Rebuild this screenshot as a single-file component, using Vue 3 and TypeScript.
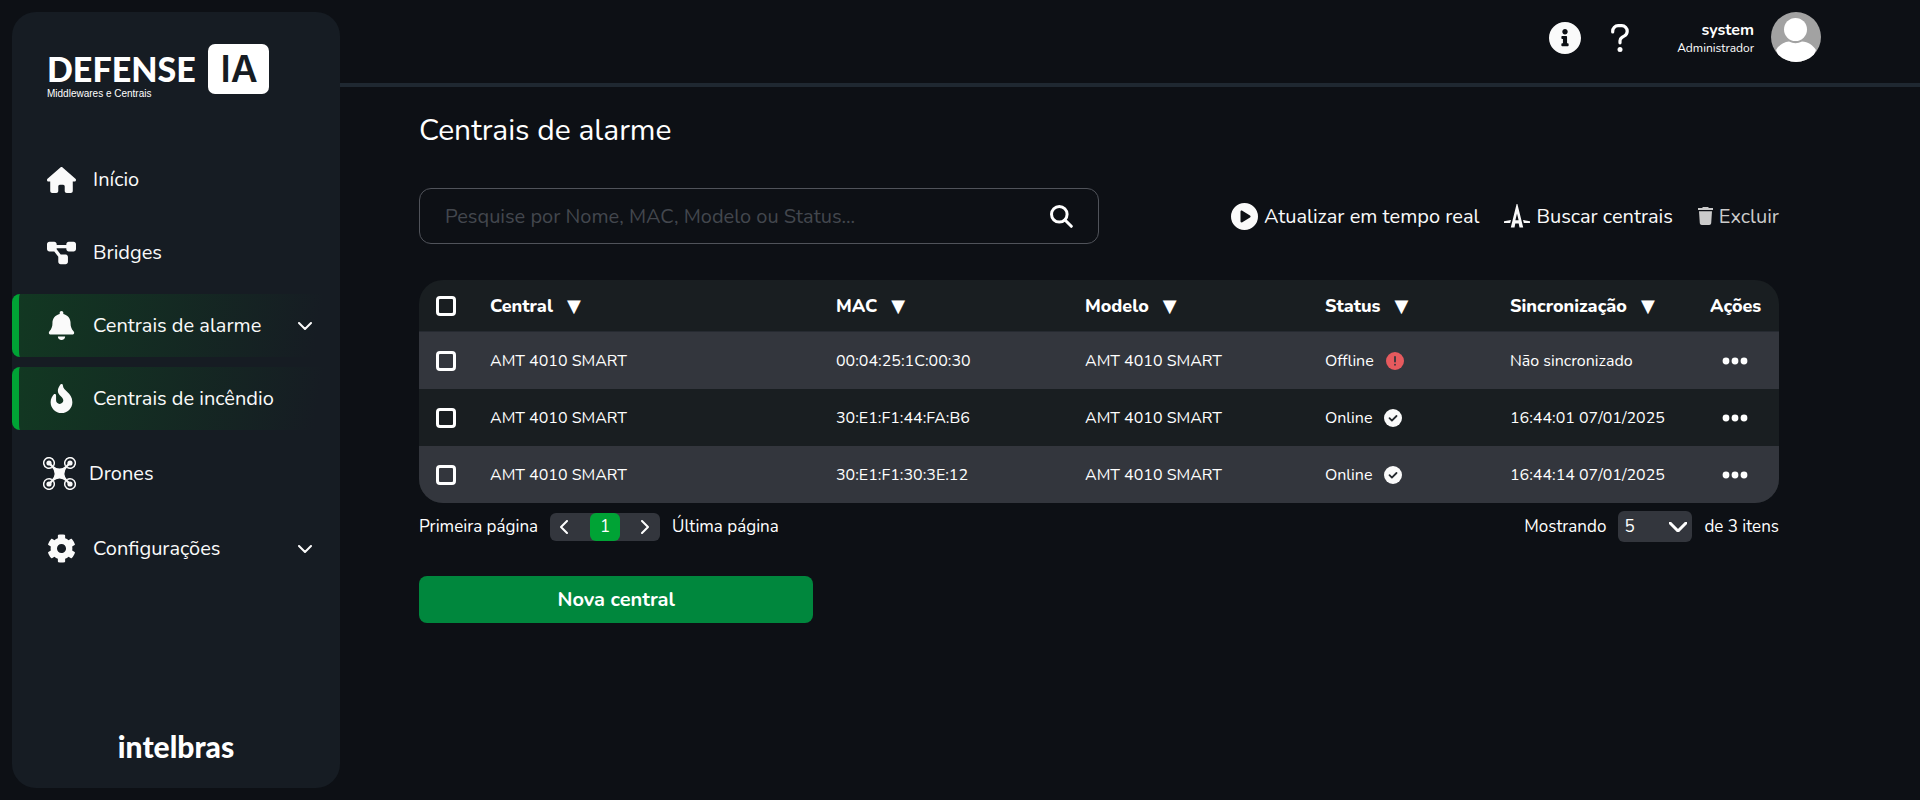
<script setup lang="ts">
import { computed, ref } from 'vue'

interface NavItem {
  label: string
  icon: 'home' | 'bridges' | 'bell' | 'fire' | 'drone' | 'gear'
  active?: boolean
  expandable?: boolean
}

interface Central {
  id: number
  name: string
  mac: string
  model: string
  online: boolean
  sync: string
}

const navItems: NavItem[] = [
  { label: 'Início', icon: 'home' },
  { label: 'Bridges', icon: 'bridges' },
  { label: 'Centrais de alarme', icon: 'bell', active: true, expandable: true },
  { label: 'Centrais de incêndio', icon: 'fire', active: true },
  { label: 'Drones', icon: 'drone' },
  { label: 'Configurações', icon: 'gear', expandable: true },
]

const columns: string[] = ['Central', 'MAC', 'Modelo', 'Status', 'Sincronização']

const centrals: Central[] = [
  { id: 1, name: 'AMT 4010 SMART', mac: '00:04:25:1C:00:30', model: 'AMT 4010 SMART', online: false, sync: 'Não sincronizado' },
  { id: 2, name: 'AMT 4010 SMART', mac: '30:E1:F1:44:FA:B6', model: 'AMT 4010 SMART', online: true, sync: '16:44:01 07/01/2025' },
  { id: 3, name: 'AMT 4010 SMART', mac: '30:E1:F1:30:3E:12', model: 'AMT 4010 SMART', online: true, sync: '16:44:14 07/01/2025' },
]

const query = ref('')
const pageSize = ref(5)
const selected = ref<number[]>([])

const rows = computed(() => {
  const q = query.value.trim().toLowerCase()
  return centrals.filter((c) =>
    [c.name, c.mac, c.model, c.online ? 'online' : 'offline'].some((v) => v.toLowerCase().includes(q)),
  )
})

const allSelected = computed({
  get: () => rows.value.length > 0 && selected.value.length === rows.value.length,
  set: (value: boolean) => {
    selected.value = value ? rows.value.map((c) => c.id) : []
  },
})
</script>

<template>
  <div class="layout">
    <aside class="sidebar">
      <div class="brand">
        <div class="brand-text">
          <span class="brand-name">DEFENSE</span>
          <span class="brand-sub">Middlewares e Centrais</span>
        </div>
        <svg class="brand-mark" viewBox="0 0 61 50" aria-hidden="true">
          <rect width="61" height="50" rx="7" fill="#fff" />
          <text x="31" y="38" text-anchor="middle">IA</text>
        </svg>
      </div>

      <nav class="nav">
        <a
          v-for="item in navItems"
          :key="item.label"
          href="#"
          class="nav-item"
          :class="[item.icon, { active: item.active }]"
        >
          <svg v-if="item.icon === 'home'" class="nav-icon" viewBox="0 0 576 512">
            <path d="M575.8 255.5c0 18-15 32.1-32 32.1h-32l.7 160.2c0 2.7-.2 5.4-.5 8.1V472c0 22.1-17.9 40-40 40H392c-22.1 0-40-17.9-40-40V384c0-17.7-14.3-32-32-32H256c-17.7 0-32 14.3-32 32v88c0 22.1-17.9 40-40 40H104c-22.1 0-40-17.9-40-40V287.6H32c-18 0-32-14-32-32.1c0-9 3-17 10-24L266.4 8c7-7 15-8 22-8s15 2 21 7L564.8 231.5c8 7 12 15 11 24z" />
          </svg>
          <svg v-else-if="item.icon === 'bridges'" class="nav-icon" viewBox="0 0 576 512">
            <path d="M0 80C0 53.500 21.500 32 48 32h96c26.500 0 48 21.500 48 48V96H384V80c0-26.500 21.500-48 48-48h96c26.500 0 48 21.500 48 48v96c0 26.500-21.500 48-48 48H432c-26.500 0-48-21.500-48-48V160H192v16c0 1.700-.1 3.400-.3 5L272 288h96c26.500 0 48 21.500 48 48v96c0 26.500-21.500 48-48 48H272c-26.500 0-48-21.500-48-48V336c0-1.700 .1-3.400 .3-5L144 224H48c-26.500 0-48-21.500-48-48V80z" />
          </svg>
          <svg v-else-if="item.icon === 'bell'" class="nav-icon" viewBox="0 0 448 512">
            <path d="M224 0c-17.700 0-32 14.300-32 32V51.200C119 66 64 130.600 64 208v18.800c0 47-17.300 92.400-48.500 127.600l-7.400 8.300c-8.400 9.400-10.400 22.900-5.300 34.400S19.400 416 32 416H416c12.600 0 24-7.400 29.200-18.900s3.100-25-5.300-34.400l-7.400-8.300C401.300 319.200 384 273.900 384 226.800V208c0-77.400-55-142-128-156.800V32c0-17.700-14.300-32-32-32zm45.300 493.300c12-12 18.700-28.300 18.700-45.300H160c0 17 6.700 33.300 18.700 45.300s28.300 18.700 45.300 18.700s33.300-6.700 45.300-18.700z" />
          </svg>
          <svg v-else-if="item.icon === 'fire'" class="nav-icon" viewBox="0 0 384 512">
            <path d="M216 23.860c0-23.800-30.650-32.770-44.150-13.040C48 191.850 224 200 224 288c0 35.630-29.110 64.460-64.850 63.990-35.170-.45-63.150-29.770-63.150-64.940v-85.510c0-21.700-26.470-32.230-41.430-16.500C27.800 213.160 0 261.330 0 320c0 105.870 86.130 192 192 192s192-86.130 192-192c0-170.290-168-193-168-296.140z" />
          </svg>
          <svg v-else-if="item.icon === 'drone'" class="nav-icon" viewBox="0 0 33 33">
            <g fill="none" stroke="currentColor" stroke-width="1.500">
              <path d="M8.900 10.400A5.300 5.300 0 1 1 10.400 8.900M24.100 10.400A5.300 5.300 0 1 0 22.600 8.900M8.900 22.600A5.300 5.300 0 1 0 10.400 24.100M24.100 22.600A5.300 5.300 0 1 1 22.600 24.100" />
              <path d="M6 6L27 27M27 6L6 27" stroke-width="2.200" />
            </g>
            <circle cx="6" cy="6" r="2.600" />
            <circle cx="27" cy="6" r="2.600" />
            <circle cx="6" cy="27" r="2.600" />
            <circle cx="27" cy="27" r="2.600" />
            <path d="M10 9Q16.500 14 23 9L24 10Q19 16.500 24 23L23 24Q16.500 19 10 24L9 23Q14 16.500 9 10Z" />
          </svg>
          <svg v-else class="nav-icon" viewBox="0 0 512 512">
            <path d="M487.400 315.700l-42.600-24.600c4.300-23.200 4.300-47 0-70.200l42.600-24.600c4.900-2.800 7.100-8.600 5.500-14-11.100-35.600-30-67.800-54.700-94.600-3.800-4.100-10-5.100-14.800-2.300L380.800 110c-17.900-15.400-38.500-27.300-60.800-35.100V25.800c0-5.600-3.900-10.500-9.400-11.700-36.700-8.200-74.300-7.800-109.200 0-5.500 1.200-9.400 6.100-9.400 11.700V75c-22.200 7.900-42.800 19.800-60.800 35.100L88.700 85.500c-4.900-2.800-11-1.900-14.800 2.300-24.700 26.700-43.600 58.900-54.700 94.600-1.700 5.400.6 11.200 5.500 14L67.300 221c-4.300 23.200-4.300 47 0 70.200l-42.600 24.600c-4.900 2.800-7.100 8.600-5.500 14 11.100 35.600 30 67.800 54.700 94.600 3.800 4.100 10 5.100 14.800 2.300l42.600-24.600c17.900 15.400 38.500 27.300 60.800 35.100v49.200c0 5.600 3.900 10.500 9.400 11.700 36.700 8.200 74.300 7.800 109.200 0 5.500-1.200 9.400-6.100 9.400-11.700v-49.200c22.200-7.900 42.800-19.800 60.800-35.100l42.600 24.600c4.900 2.800 11 1.900 14.800-2.300 24.700-26.700 43.600-58.900 54.700-94.600 1.500-5.500-.7-11.300-5.600-14.100zM256 336c-44.100 0-80-35.900-80-80s35.900-80 80-80 80 35.900 80 80-35.900 80-80 80z" />
          </svg>
          <span class="nav-label">{{ item.label }}</span>
          <svg v-if="item.expandable" class="nav-chevron" viewBox="0 0 14 8">
            <path d="M1 1l6 6 6-6" />
          </svg>
        </a>
      </nav>

      <div class="maker">intelbras</div>
    </aside>

    <div class="content">
      <header class="topbar">
        <button type="button" class="icon-button" aria-label="Informações">
          <svg class="info-icon" viewBox="8 8 496 496">
            <path d="M256 8C119.043 8 8 119.083 8 256c0 136.997 111.043 248 248 248s248-111.003 248-248C504 119.083 392.957 8 256 8zm0 110c23.196 0 42 18.804 42 42s-18.804 42-42 42-42-18.804-42-42 18.804-42 42-42zm56 254c0 6.627-5.373 12-12 12h-88c-6.627 0-12-5.373-12-12v-24c0-6.627 5.373-12 12-12h12v-64h-12c-6.627 0-12-5.373-12-12v-24c0-6.627 5.373-12 12-12h64c6.627 0 12 5.373 12 12v100h12c6.627 0 12 5.373 12 12v24z" />
          </svg>
        </button>
        <button type="button" class="icon-button" aria-label="Ajuda">
          <svg class="help-icon" viewBox="0 0 18 28">
            <path d="M1.700 8V7.200A5.400 5.400 0 0 1 7.100 1.700h3.700a5.400 5.400 0 0 1 5.400 5.500c0 2.100-1.100 3.700-2.900 4.800l-2.300 1.400c-1.200.8-2 2-2 3.400v2" fill="none" stroke="currentColor" stroke-width="3.200" stroke-linecap="round" />
            <circle cx="9" cy="25.500" r="2.500" />
          </svg>
        </button>
        <div class="user">
          <span class="user-name">system</span>
          <span class="user-role">Administrador</span>
        </div>
        <svg class="avatar" viewBox="0 0 50 50" role="img" aria-label="Avatar">
          <defs>
            <clipPath id="avatar-clip"><circle cx="25" cy="25" r="25" /></clipPath>
          </defs>
          <g clip-path="url(#avatar-clip)">
            <rect width="50" height="50" fill="#a2a2a2" />
            <path d="M5 38C8 33 13 30 18 29.500Q24.500 33 31 29.500C37 30 42 33 45 38L40 50H10Z" fill="#fff" />
            <circle cx="24.500" cy="17.500" r="11.500" fill="#fff" />
          </g>
        </svg>
      </header>

      <main class="main">
        <h1 class="title">Centrais de alarme</h1>

        <div class="toolbar">
          <form class="search" role="search" @submit.prevent>
            <input v-model="query" type="text" aria-label="Pesquisar centrais" placeholder="Pesquise por Nome, MAC, Modelo ou Status..." />
            <button type="submit" class="icon-button" aria-label="Pesquisar">
              <svg class="search-icon" viewBox="0 0 23 23">
                <circle cx="9.300" cy="9.300" r="7.800" />
                <path d="M15 15l6.300 6.300" />
              </svg>
            </button>
          </form>

          <div class="actions">
            <button type="button" class="action">
              <svg class="play-icon" viewBox="0 0 27 27">
                <path fill-rule="evenodd" d="M13.500 0a13.500 13.500 0 1 0 0 27a13.500 13.500 0 1 0 0-27zM9.500 8.700v9.600c0 1 1 1.500 1.800 1l7.700-4.800c.8-.5.8-1.500 0-2l-7.700-4.800c-.8-.5-1.800 0-1.800 1z" />
              </svg>
              Atualizar em tempo real
            </button>
            <button type="button" class="action">
              <svg class="radar-icon" viewBox="0 0 26 24">
                <path fill-rule="evenodd" d="M12.600 0h.8l5.800 23.500h-3.700l-.8-4h-3.400l-.8 4H6.800zM13 9.500l-1.600 6.800h3.200z" />
                <path d="M0 17.200l7-1.200-.8 3H0zM26 17.200l-7-1.200.8 3H26z" />
              </svg>
              Buscar centrais
            </button>
            <button type="button" class="action muted">
              <svg class="trash-icon" viewBox="0 0 15 18">
                <path d="M5 0h5l1 1h4v2H0V1h4zM1 4.200h13l-.8 12q-.2 1.800-2 1.800H3.800q-1.800 0-2-1.800z" />
              </svg>
              Excluir
            </button>
          </div>
        </div>

        <table class="table">
          <colgroup>
            <col class="col-check" />
            <col class="col-central" />
            <col class="col-mac" />
            <col class="col-model" />
            <col class="col-status" />
            <col class="col-sync" />
            <col class="col-actions" />
          </colgroup>
          <thead>
            <tr>
              <th class="check-cell">
                <input v-model="allSelected" type="checkbox" class="checkbox" aria-label="Selecionar todas" />
              </th>
              <th v-for="column in columns" :key="column" scope="col">
                <button type="button" class="sort">
                  {{ column }}<span class="sort-arrow">▼</span>
                </button>
              </th>
              <th scope="col">Ações</th>
            </tr>
          </thead>
          <tbody>
            <tr v-for="row in rows" :key="row.id">
              <td class="check-cell">
                <input v-model="selected" type="checkbox" :value="row.id" class="checkbox" :aria-label="`Selecionar ${row.mac}`" />
              </td>
              <td>{{ row.name }}</td>
              <td>{{ row.mac }}</td>
              <td>{{ row.model }}</td>
              <td>
                <span class="status">
                  {{ row.online ? 'Online' : 'Offline' }}
                  <svg v-if="row.online" class="status-icon" viewBox="0 0 18 18">
                    <circle cx="9" cy="9" r="9" fill="#fafafa" />
                    <path d="M5.500 9.200l2.400 2.400 4.600-4.600" fill="none" stroke="#24292e" stroke-width="1.800" stroke-linecap="round" stroke-linejoin="round" />
                  </svg>
                  <svg v-else class="status-icon" viewBox="0 0 18 18">
                    <circle cx="9" cy="9" r="9" fill="#e65a5e" />
                    <path d="M9 4.800v4.700M9 12.600v.2" stroke="#33363d" stroke-width="1.800" stroke-linecap="round" />
                  </svg>
                </span>
              </td>
              <td>{{ row.sync }}</td>
              <td class="more-cell">
                <button type="button" class="icon-button" :aria-label="`Ações de ${row.mac}`">
                  <svg class="more-icon" viewBox="0 0 26 8">
                    <circle cx="4" cy="4" r="3.400" />
                    <circle cx="13" cy="4" r="3.400" />
                    <circle cx="22" cy="4" r="3.400" />
                  </svg>
                </button>
              </td>
            </tr>
          </tbody>
        </table>

        <div class="table-footer">
          <div class="pagination">
            <button type="button" class="page-link">Primeira página</button>
            <div class="pager">
              <button type="button" class="page-step" aria-label="Página anterior">
                <svg viewBox="0 0 8 14"><path d="M7 1L1 7l6 6" /></svg>
              </button>
              <button type="button" class="page-current" aria-current="page">1</button>
              <button type="button" class="page-step" aria-label="Próxima página">
                <svg viewBox="0 0 8 14"><path d="M1 1l6 6-6 6" /></svg>
              </button>
            </div>
            <button type="button" class="page-link">Última página</button>
          </div>

          <div class="page-size">
            <label for="page-size">Mostrando</label>
            <div class="select-wrap">
              <select id="page-size" v-model.number="pageSize">
                <option :value="5">5</option>
                <option :value="10">10</option>
                <option :value="20">20</option>
              </select>
              <svg class="select-chevron" viewBox="0 0 18 10"><path d="M1 1l8 8 8-8" /></svg>
            </div>
            <span>de {{ rows.length }} itens</span>
          </div>
        </div>

        <button type="button" class="primary">Nova central</button>
      </main>
    </div>
  </div>
</template>

<style>
body {
  margin: 0;
  background: #0d1015;
}
</style>

<style scoped>
.layout {
  box-sizing: border-box;
  display: flex;
  min-height: 100vh;
  padding: 12px 0 12px 12px;
  background: #0d1015;
  color: #fff;
  font-family: Nunito, Lato, "Open Sans", sans-serif;
  font-size: 17px;
}

button,
input,
select {
  margin: 0;
  padding: 0;
  border: 0;
  background: none;
  color: inherit;
  font: inherit;
}

button {
  cursor: pointer;
}

svg {
  display: block;
  flex: none;
  fill: currentColor;
}

.sidebar {
  display: flex;
  flex: none;
  flex-direction: column;
  width: 328px;
  border-radius: 24px;
  background: #161c23;
}

.brand {
  display: flex;
  gap: 12px;
  padding: 32px 35px 0;
}

.brand-text {
  display: flex;
  flex-direction: column;
  width: 149px;
  padding-top: 5px;
}

.brand-name {
  font-family: Lato, sans-serif;
  font-size: 34px;
  font-weight: 900;
  line-height: 39px;
}

.brand-sub {
  font-family: "Liberation Sans", Arial, sans-serif;
  font-size: 10px;
  line-height: 12px;
  white-space: nowrap;
}

.brand-mark {
  width: 61px;
  height: 50px;
}

.brand-mark text {
  fill: #161c23;
  font-family: Inter, sans-serif;
  font-size: 37px;
  font-weight: 600;
}

.nav {
  display: flex;
  flex-direction: column;
  gap: 10px;
  margin-top: 48px;
}

.nav-item {
  display: flex;
  align-items: center;
  gap: 17px;
  box-sizing: border-box;
  min-height: 63px;
  padding: 0 28px;
  border-left: 7px solid transparent;
  border-radius: 8px;
  color: #fafafa;
  font-size: 20px;
  text-decoration: none;
}

.nav-item.active {
  border-left-color: #00a335;
  background: linear-gradient(100deg, #123822, #161c23 92%);
}

.nav-item.drone {
  gap: 13px;
  min-height: 67px;
  padding-left: 24px;
}

.nav-icon {
  width: 29px;
  height: 29px;
}

.home .nav-icon,
.bridges .nav-icon {
  height: 26px;
}

.drone .nav-icon {
  width: 33px;
  height: 33px;
}

.nav-label {
  flex: 1;
}

.nav-chevron {
  width: 14px;
  height: 8px;
}

.nav-chevron path,
.page-step path,
.select-chevron path {
  fill: none;
  stroke: currentColor;
  stroke-width: 2;
  stroke-linecap: round;
  stroke-linejoin: round;
}

.maker {
  margin-top: auto;
  padding-bottom: 24px;
  font-family: Lato, sans-serif;
  font-size: 30px;
  font-weight: 900;
  line-height: 36px;
  text-align: center;
}

.content {
  flex: 1;
  min-width: 0;
}

.topbar {
  display: flex;
  align-items: flex-start;
  height: 71px;
  padding-right: 99px;
  border-bottom: 4px solid #1f2831;
  justify-content: flex-end;
}

.icon-button {
  display: flex;
}

.info-icon {
  width: 32px;
  height: 32px;
  margin: 10px 30px 0 0;
  color: #fafafa;
}

.help-icon {
  width: 18px;
  height: 28px;
  margin: 12px 48px 0 0;
}

.user {
  display: flex;
  flex-direction: column;
  padding-top: 9px;
  text-align: right;
}

.user-name {
  font-size: 16px;
  font-weight: 700;
  line-height: 18px;
}

.user-role {
  font-size: 12px;
  line-height: 18px;
}

.avatar {
  width: 50px;
  height: 50px;
  margin-left: 17px;
}

.main {
  padding: 24px 141px 24px 79px;
}

.title {
  margin: 0;
  font-size: 30px;
  font-weight: 400;
  line-height: 40px;
}

.toolbar {
  display: flex;
  align-items: center;
  justify-content: space-between;
  gap: 24px;
  margin-top: 37px;
}

.search {
  display: flex;
  align-items: center;
  box-sizing: border-box;
  width: 50%;
  height: 56px;
  padding: 0 25px;
  border: 1px solid #50535a;
  border-radius: 12px;
  font-size: 20px;
}

.search input {
  flex: 1;
  min-width: 0;
  outline: 0;
}

.search input::placeholder {
  color: #43474e;
  opacity: 1;
}

.search-icon {
  width: 23px;
  height: 23px;
  fill: none;
  stroke: currentColor;
  stroke-width: 3;
  stroke-linecap: round;
}

.actions {
  display: flex;
  gap: 25px;
  font-size: 20px;
}

.action {
  display: flex;
  align-items: center;
  gap: 6px;
  color: #fafafa;
  white-space: nowrap;
}

.action.muted {
  color: #cbcbcb;
}

.play-icon {
  width: 27px;
  height: 27px;
}

.radar-icon {
  width: 26px;
  height: 24px;
}

.trash-icon {
  width: 15px;
  height: 18px;
}

.table {
  width: 100%;
  margin-top: 36px;
  overflow: hidden;
  border-radius: 24px;
  border-spacing: 0;
  background: #191e21;
  font-size: 16px;
  table-layout: fixed;
}

.col-check {
  width: 71px;
}

.col-mac {
  width: 249px;
}

.col-model {
  width: 240px;
}

.col-status {
  width: 185px;
}

.col-sync {
  width: 200px;
}

.col-actions {
  width: 69px;
}

th,
td {
  padding: 0;
  text-align: left;
}

th {
  height: 51px;
  border-bottom: 1px solid #262a31;
  font-size: 18px;
  font-weight: 800;
}

td {
  height: 57px;
}

tbody tr:nth-child(odd) {
  background: #33363d;
}

.check-cell {
  padding-left: 17px;
}

.checkbox {
  display: block;
  box-sizing: border-box;
  width: 20px;
  height: 20px;
  border: 3px solid #fff;
  border-radius: 4px;
  appearance: none;
}

.checkbox:checked {
  background: #00a335;
}

.sort {
  display: flex;
  align-items: center;
  gap: 14px;
}

.sort-arrow {
  font-family: "DejaVu Sans", sans-serif;
  font-size: 18px;
  font-weight: 400;
  line-height: 20px;
}

.status {
  display: flex;
  align-items: center;
  gap: 12px;
}

.status-icon {
  width: 18px;
  height: 18px;
}

.more-cell {
  padding-left: 12px;
}

.more-icon {
  width: 26px;
  height: 8px;
}

.table-footer {
  display: flex;
  align-items: center;
  justify-content: space-between;
  margin-top: 8px;
}

.pagination,
.page-size {
  display: flex;
  align-items: center;
  gap: 12px;
}

.pager {
  display: flex;
  height: 28px;
  border-radius: 6px;
  background: #33363d;
}

.page-step {
  display: flex;
  align-items: center;
  justify-content: center;
  width: 40px;
}

.page-step:first-child {
  padding-right: 12px;
}

.page-step:last-child {
  padding-left: 10px;
}

.page-step svg {
  width: 8px;
  height: 14px;
}

.page-current {
  width: 30px;
  border-radius: 6px;
  background: #00a335;
}

.select-wrap {
  display: grid;
  align-items: center;
  width: 74px;
  height: 31px;
  border-radius: 6px;
  background: #33363d;
}

.select-wrap > * {
  grid-area: 1 / 1;
}

.select-wrap select {
  height: 31px;
  padding-left: 6px;
  appearance: none;
}

.select-chevron {
  width: 18px;
  height: 10px;
  justify-self: end;
  margin-right: 5px;
  pointer-events: none;
}

.select-chevron path {
  stroke-width: 3;
}

.primary {
  width: 29%;
  height: 47px;
  margin-top: 34px;
  border-radius: 8px;
  background: #00873d;
  font-size: 20px;
  font-weight: 700;
}
</style>
